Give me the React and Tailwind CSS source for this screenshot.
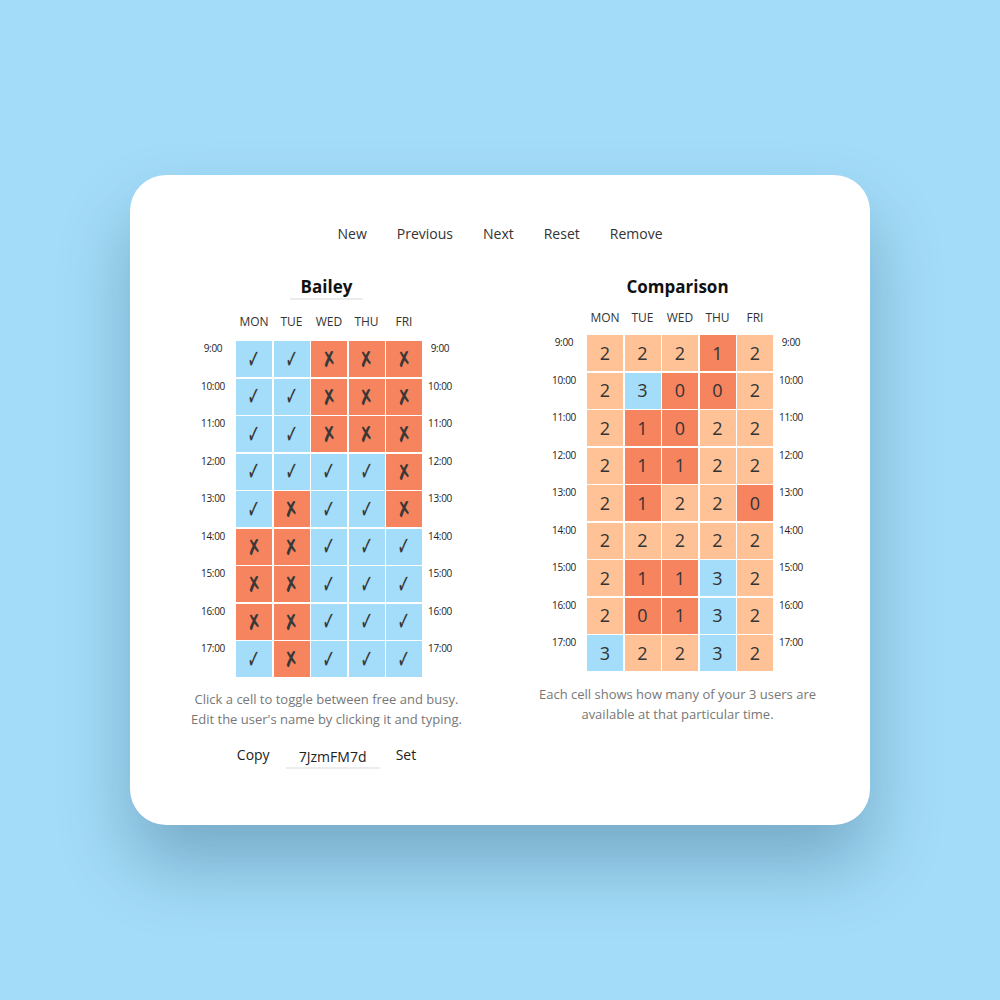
const days = ["MON", "TUE", "WED", "THU", "FRI"];
const hours = ["9:00", "10:00", "11:00", "12:00", "13:00", "14:00", "15:00", "16:00", "17:00"];

// 1 = free, 0 = busy
const bailey = [
  [1, 1, 0, 0, 0],
  [1, 1, 0, 0, 0],
  [1, 1, 0, 0, 0],
  [1, 1, 1, 1, 0],
  [1, 0, 1, 1, 0],
  [0, 0, 1, 1, 1],
  [0, 0, 1, 1, 1],
  [0, 0, 1, 1, 1],
  [1, 0, 1, 1, 1],
];

const counts = [
  [2, 2, 2, 1, 2],
  [2, 3, 0, 0, 2],
  [2, 1, 0, 2, 2],
  [2, 1, 1, 2, 2],
  [2, 1, 2, 2, 0],
  [2, 2, 2, 2, 2],
  [2, 1, 1, 3, 2],
  [2, 0, 1, 3, 2],
  [3, 2, 2, 3, 2],
];

const font = { fontFamily: '"Open Sans", "Noto Sans", sans-serif' };

function countColor(n) {
  if (n >= 3) return "bg-[#a3ddfa]";
  if (n === 2) return "bg-[#ffc297]";
  return "bg-[#f5845f]";
}

function Schedule({ rows, renderCell, headerGap }) {
  return (
    <div className="flex flex-col items-center">
      <div className={`flex ${headerGap}`}>
        <div className="w-[38px]" />
        <div className="flex gap-[1.5px]">
          {days.map((d) => (
            <div key={d} className="w-[36px] text-center text-[12px] leading-[16px] text-[#333]">
              {d}
            </div>
          ))}
        </div>
        <div className="w-[33px]" />
      </div>
      <div className="flex flex-col gap-[1.5px]">
        {rows.map((row, r) => (
          <div key={hours[r]} className="flex">
            <div className="mr-[8px] w-[30px] pt-[1px] text-center text-[10px] leading-[12px] tracking-[-0.3px] text-[#222]">
              {hours[r]}
            </div>
            <div className="flex gap-[1.5px]">
              {row.map((v, c) => renderCell(v, c))}
            </div>
            <div className="ml-[3px] w-[30px] pt-[1px] text-center text-[10px] leading-[12px] tracking-[-0.3px] text-[#222]">
              {hours[r]}
            </div>
          </div>
        ))}
      </div>
    </div>
  );
}

export default function App() {
  return (
    <div className="flex min-h-screen items-center justify-center bg-[#a3dcf8]" style={font}>
      <div className="flex h-[650px] w-[740px] flex-col items-center rounded-[36px] bg-white pt-[49px] shadow-[0_40px_70px_rgba(20,60,90,0.3)]">
        <nav className="flex gap-[30px] text-[14px] leading-[20px] text-[#333]">
          <button>New</button>
          <button>Previous</button>
          <button>Next</button>
          <button>Reset</button>
          <button>Remove</button>
        </nav>

        <div className="mt-[31px] flex gap-[11px] pl-[4px]">
          <section className="flex w-[340px] flex-col items-center">
            <input
              defaultValue="Bailey"
              className="h-[25px] w-[73px] border-b-2 border-[#ececec] bg-transparent text-center text-[17px] font-bold leading-[24px] text-[#111] outline-none"
            />
            <div className="mt-[14px]">
              <Schedule
                rows={bailey}
                headerGap="mb-[11px]"
                renderCell={(v, c) => (
                  <button
                    key={c}
                    className={`flex h-[36px] w-[36px] items-center justify-center text-[#383838] ${
                      v ? "bg-[#a3ddfa] text-[26px]" : "bg-[#f5845f] text-[20px]"
                    }`}
                    style={{ fontFamily: '"DejaVu Sans", sans-serif' }}
                  >
                    <span className={`inline-block ${v ? "scale-x-[0.6]" : "skew-x-[14deg] scale-x-[0.95] scale-y-[1.1]"}`}>
                      {v ? "✓" : "✗"}
                    </span>
                  </button>
                )}
              />
            </div>
            <p className="mt-[12px] text-center text-[13px] leading-[20px] text-[#777]">
              Click a cell to toggle between free and busy.
              <br />
              Edit the user's name by clicking it and typing.
            </p>
            <div className="mt-[16px] flex items-start text-[14px] leading-[20px] text-[#222]">
              <button>Copy</button>
              <input
                defaultValue="7JzmFM7d"
                className="mx-[16px] h-[24px] w-[94px] border-b-2 border-[#ececec] bg-transparent text-center text-[14px] leading-[20px] text-[#222] outline-none"
              />
              <button>Set</button>
            </div>
          </section>

          <section className="flex w-[340px] flex-col items-center">
            <h2 className="h-[24px] text-[17px] font-bold leading-[24px] text-[#111]">Comparison</h2>
            <div className="mt-[11px]">
              <Schedule
                rows={counts}
                headerGap="mb-[9px]"
                renderCell={(n, c) => (
                  <div
                    key={c}
                    className={`flex h-[36px] w-[36px] items-center justify-center text-[18px] text-[#333] ${countColor(n)}`}
                  >
                    {n}
                  </div>
                )}
              />
            </div>
            <p className="mt-[13px] text-center text-[13px] leading-[20px] text-[#777]">
              Each cell shows how many of your 3 users are
              <br />
              available at that particular time.
            </p>
          </section>
        </div>
      </div>
    </div>
  );
}
